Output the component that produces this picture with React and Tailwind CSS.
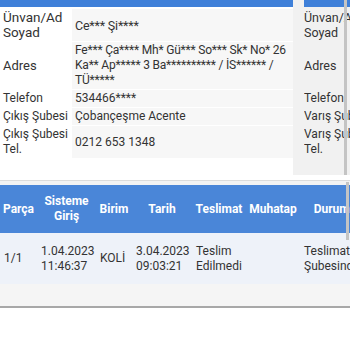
import React from "react";

const font = { fontFamily: "Roboto, 'Noto Sans', sans-serif" };

function InfoRow({ label, value, labelClass = "" }) {
  return (
    <div className="flex">
      <div className={"w-[72px] shrink-0 pl-[3px] py-[1px] leading-[15px] whitespace-nowrap " + labelClass}>{label}</div>
      <div className="flex-1 bg-[#f7f7f7] pl-[3px] pr-[3px] py-[1px] leading-[15px] flex items-center whitespace-nowrap">{value}</div>
    </div>
  );
}

export default function App() {
  return (
    <div className="relative w-[350px] h-[350px] overflow-hidden bg-white text-[12px] text-[#333]" style={font}>
      {/* Top cards */}
      <div className="flex items-start w-[350px] -mt-[21px]">
        <div className="w-[293px] shrink-0 flex flex-col">
          <div className="h-[28px] bg-[#3f80d9] text-white font-bold text-[15px] pl-[6px] leading-[28px]">Gönderen</div>
          <div className="flex flex-col gap-[1px] pt-[2px]">
            <InfoRow label={<>Ünvan/Ad<br />Soyad</>} labelClass="text-[13.5px]" value={<span className="text-[12.5px] tracking-[-0.2px]">Ce*** Şi****</span>} />
            <InfoRow
              label="Adres"
              labelClass="flex items-center text-[13px]"
              value={
                <span className="tracking-[-0.2px]">
                  Fe*** Ça**** Mh* Gü*** So*** Sk* No* 26
                  <br />
                  Ka** Ap***** 3 Ba********** / İS****** /
                  <br />
                  TÜ*****
                </span>
              }
            />
            <InfoRow label="Telefon" value="534466****" />
            <InfoRow label="Çıkış Şubesi" value="Çobançeşme Acente" />
            <InfoRow label={<>Çıkış Şubesi<br />Tel.</>} value="0212 653 1348" />
          </div>
        </div>
        <div className="flex-1 bg-[#f1f1f1] pl-[11px] flex flex-col h-[196px]">
          <div className="h-[28px] bg-[#3f80d9] text-white font-bold text-[15px] pl-[6px] leading-[28px] whitespace-nowrap overflow-hidden">Alıcı</div>
          <div className="flex flex-col gap-[1px] pt-[2px] whitespace-nowrap overflow-hidden">
            <div className="leading-[15px] py-[1px] text-[12.5px]">Ünvan/Ad<br />Soyad</div>
            <div className="leading-[15px] py-[1px] h-[47px] flex items-center text-[12.5px]">Adres</div>
            <div className="leading-[15px] py-[1px]">Telefon</div>
            <div className="leading-[15px] py-[1px]">Varış Şubesi</div>
            <div className="leading-[15px] py-[1px]">Varış Şubesi<br />Tel.</div>
          </div>
        </div>
      </div>

      {/* Table */}
      <div className="mt-[5px] w-[350px] overflow-hidden border-t border-[#dcdcdc] pt-[4px] bg-[#f3f3f3]">
        <div className="w-[420px]">
          <div className="flex h-[48px] bg-[#4a86d8] text-white font-bold items-center text-center leading-[15px]">
            <div className="w-[37px] shrink-0">Parça</div>
            <div className="w-[59px] shrink-0">Sisteme<br />Giriş</div>
            <div className="w-[36px] shrink-0">Birim</div>
            <div className="w-[60px] shrink-0">Tarih</div>
            <div className="w-[54px] shrink-0">Teslimat</div>
            <div className="w-[54px] shrink-0">Muhatap</div>
            <div className="w-[70px] shrink-0">Durumu</div>
          </div>
          <div className="flex h-[51px] bg-[#eef2f9] items-center leading-[15px]">
            <div className="w-[37px] shrink-0 pl-[4px]">1/1</div>
            <div className="w-[59px] shrink-0 pl-[4px]">1.04.2023<br />11:46:37</div>
            <div className="w-[36px] shrink-0 pl-[4px]">KOLİ</div>
            <div className="w-[60px] shrink-0 pl-[4px]">3.04.2023<br />09:03:21</div>
            <div className="w-[54px] shrink-0 pl-[4px]">Teslim<br />Edilmedi</div>
            <div className="w-[54px] shrink-0 pl-[4px]"></div>
            <div className="w-[70px] shrink-0 pl-[4px] whitespace-nowrap">Teslimat<br />Şubesinde</div>
          </div>
          <div className="h-[24px] bg-[#f5f5f5] border-b-2 border-[#a8a8a8]"></div>
        </div>
      </div>
      <div className="h-[42px] bg-white"></div>

      {/* scrollbar overlays */}
      <div className="absolute left-[344px] top-0 w-[3px] h-[175px] bg-[#c4c4c4]"></div>
      <div className="absolute left-[346px] top-[182px] w-[3px] h-[58px] bg-[#c4c4c4]"></div>
    </div>
  );
}
